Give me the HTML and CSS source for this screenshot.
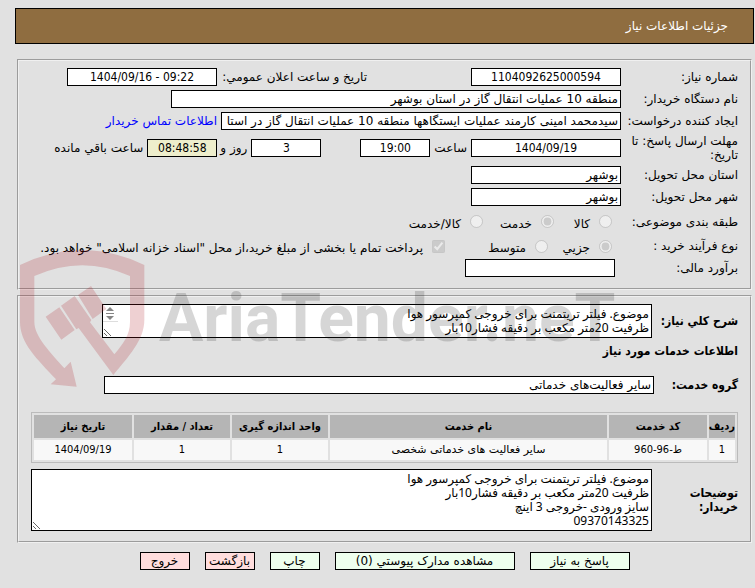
FILE: index.html
```html
<!DOCTYPE html>
<html lang="fa" dir="rtl">
<head>
    <meta charset="UTF-8">
    <meta name="viewport" content="width=device-width, initial-scale=1.0">
    <title>جزئیات اطلاعات نیاز</title>
    <link rel="stylesheet" href="styles.css">
</head>
<body>
    <h1 class="page-title">جزئیات اطلاعات نیاز</h1>

    <form>
        <fieldset class="panel">
            <div class="row">
                <label class="caption" for="needNo">شماره نیاز:</label>
                <input class="field center" type="text" id="needNo" value="1104092625000594" readonly>
                <label class="caption-date" for="announceDate">تاریخ و ساعت اعلان عمومي:</label>
                <input class="field center" type="text" id="announceDate" dir="ltr" value="1404/09/16 - 09:22" readonly>
            </div>
            <div class="row">
                <label class="caption" for="buyer">نام دستگاه خریدار:</label>
                <input class="field buyer" type="text" id="buyer" value="منطقه 10 عملیات انتقال گاز در استان بوشهر" readonly>
            </div>
            <div class="row">
                <label class="caption" for="creator">ایجاد کننده درخواست:</label>
                <input class="field creator" type="text" id="creator" value="سیدمحمد امینی کارمند عملیات ایستگاهها منطقه 10 عملیات انتقال گاز در استا" readonly>
                <a class="contact" href="#">اطلاعات تماس خریدار</a>
            </div>
            <div class="row tall">
                <label class="caption" for="deadline">مهلت ارسال پاسخ: تا تاریخ:</label>
                <input class="field center" type="text" id="deadline" dir="ltr" value="1404/09/19" readonly>
                <label for="deadlineTime">ساعت</label>
                <input class="field small center" type="text" id="deadlineTime" dir="ltr" value="19:00" readonly>
                <input class="field small center days" type="text" id="daysLeft" value="3" readonly>
                <label class="days-label" for="daysLeft">روز و</label>
                <input class="field small center timer" type="text" id="timeLeft" dir="ltr" value="08:48:58" readonly>
                <label for="timeLeft">ساعت باقي مانده</label>
            </div>
            <div class="row">
                <label class="caption" for="province">استان محل تحویل:</label>
                <input class="field" type="text" id="province" value="بوشهر" readonly>
            </div>
            <div class="row">
                <label class="caption" for="city">شهر محل تحویل:</label>
                <input class="field" type="text" id="city" value="بوشهر" readonly>
            </div>
            <div class="row options">
                <span class="caption">طبقه بندی موضوعی:</span>
                <div class="option goods"><input type="radio" name="category" id="goods" disabled><label for="goods">کالا</label></div>
                <div class="option service"><input type="radio" name="category" id="service" checked disabled><label for="service">خدمت</label></div>
                <div class="option"><input type="radio" name="category" id="both" disabled><label for="both">کالا/خدمت</label></div>
            </div>
            <div class="row">
                <span class="caption">نوع فرآیند خرید :</span>
                <div class="option minor"><input type="radio" name="process" id="minor" checked disabled><label for="minor">جزیي</label></div>
                <div class="option medium"><input type="radio" name="process" id="medium" disabled><label for="medium">متوسط</label></div>
                <div class="option"><input type="checkbox" id="treasury" checked disabled><label for="treasury">پرداخت تمام یا بخشی از مبلغ خرید،از محل "اسناد خزانه اسلامی" خواهد بود.</label></div>
            </div>
            <div class="row">
                <label class="caption" for="estimate">برآورد مالی:</label>
                <input class="field estimate" type="text" id="estimate" readonly>
            </div>
        </fieldset>

        <fieldset class="panel details">
            <div class="detail-row">
                <label class="bold-caption" for="summary">شرح كلي نياز:</label>
                <div class="summary-box">
                    <textarea class="area summary" id="summary" readonly>موضوع. فیلتر تریتمنت برای خروجی کمپرسور هوا
ظرفیت 20متر مکعب بر دقیقه فشار10بار</textarea>
                    <svg class="arrows" width="15" height="17" viewBox="0 0 15 17">
                        <path d="M3 6L7 2L11 6ZM3 11L7 15L11 11Z" fill="#858585"/>
                        <path d="M3 8.5H11" stroke="#858585"/>
                        <path d="M0 16.5H15" stroke="#ddd"/>
                    </svg>
                </div>
            </div>
            <h2 class="section-title">اطلاعات خدمات مورد نیاز</h2>
            <div class="detail-row">
                <label class="bold-caption group-caption" for="group">گروه خدمت:</label>
                <input class="field group" type="text" id="group" value="سایر فعالیت‌های خدماتی" readonly>
            </div>

            <table class="services">
                <thead>
                    <tr>
                        <th class="col-index">ردیف</th>
                        <th class="col-code">کد خدمت</th>
                        <th>نام خدمت</th>
                        <th class="col-unit">واحد اندازه گیری</th>
                        <th class="col-unit">تعداد / مقدار</th>
                        <th class="col-code">تاریخ نیاز</th>
                    </tr>
                </thead>
                <tbody>
                    <tr>
                        <td>1</td>
                        <td>ط-96-960</td>
                        <td class="service-name">سایر فعالیت های خدماتی شخصی</td>
                        <td>1</td>
                        <td>1</td>
                        <td>1404/09/19</td>
                    </tr>
                </tbody>
            </table>

            <div class="detail-row">
                <label class="bold-caption" for="notes">توضیحات خریدار:</label>
                <textarea class="area notes" id="notes" readonly>موضوع. فیلتر تریتمنت برای خروجی کمپرسور هوا
ظرفیت 20متر مکعب بر دقیقه فشار10بار
سایز ورودی -خروجی 3 اینچ
09370143325</textarea>
            </div>
        </fieldset>

        <div class="actions">
            <button class="btn answer" type="button">پاسخ به نیاز</button>
            <button class="btn attachments" type="button">مشاهده مدارک پیوستي (0)</button>
            <button class="btn" type="button">چاپ</button>
            <button class="btn red" type="button">بازگشت</button>
            <button class="btn red" type="button">خروج</button>
        </div>
    </form>

    <div class="watermark" dir="ltr">
        <svg width="147" height="150" viewBox="0 0 441 450">
            <path d="M60 75Q247 -15 433 75V240C433 300 385 350 340 405L236 264L229 268L183 197L224 168L274 240L270 247L343 343C370 310 390 285 390 245V108Q247 43 103 108V245C103 290 150 335 193 385L212 365L230 440L152 433L168 418C110 355 60 310 60 245Z"/>
            <path d="M137 230L178 202L224 270L184 299ZM234 165L273 138L319 207L278 237Z"/>
        </svg>
        <span class="watermark-text">AriaTender.neT</span>
    </div>
</body>
</html>
```
FILE: styles.css
```css
* {
    box-sizing: border-box;
}
body {
    position: relative;
    margin: 0;
    padding: 8px 1px 0 15px;
    background-color: #e1e1e1;
    color: #000;
    font-family: "DejaVu Sans", sans-serif;
    font-size: 12px;
    line-height: 14px;
}
.page-title {
    margin: 0 0 15px;
    padding: 10px 25px;
    border: 1px solid #000;
    background-color: #8f6d40;
    color: #fff;
    font-size: 12px;
    font-weight: normal;
    line-height: 14px;
}
.panel {
    min-width: 0;
    margin: 0 2px 5px;
    padding: 5px 12px 9px;
    border: 2px groove #f0f0f0;
}
.row {
    display: flex;
    align-items: center;
    gap: 4px;
    height: 22px;
    white-space: nowrap;
}
.tall {
    height: 32px;
}
.options {
    height: 27px;
}
.caption {
    flex: none;
    width: 113px;
    white-space: normal;
}
.field {
    flex: none;
    width: 150px;
    height: 18px;
    padding: 0 2px;
    border: 1px solid #000;
    border-radius: 0;
    background-color: #fff;
    color: #000;
    font: inherit;
}
.center {
    font-family: "DejaVu Sans Condensed", "DejaVu Sans", sans-serif;
    text-align: center;
}
.caption-date {
    width: 246px;
    padding-right: 100px;
}
.buyer {
    width: 450px;
}
.creator {
    width: 400px;
}
.contact {
    color: #00f;
    text-decoration: none;
}
.small {
    width: 70px;
}
.days {
    margin-right: 35px;
}
.days-label {
    width: 26px;
}
.timer {
    background-color: #eeeecc;
}
.estimate {
    margin-right: 6px;
}

/* radio and checkbox choices */
.option {
    display: flex;
    align-items: center;
    gap: 9px;
}
.option input {
    flex: none;
    width: 13px;
    height: 13px;
    margin: 0;
}
.option label {
    padding-top: 4px;
}
.goods {
    width: 54px;
    margin-right: 9px;
}
.service {
    width: 67px;
}
.minor {
    width: 60px;
    margin-right: 9px;
}
.medium {
    width: 99px;
}

.details {
    padding-top: 7px;
    padding-bottom: 10px;
}
.detail-row {
    display: flex;
    align-items: center;
}
.bold-caption {
    flex: none;
    width: 86px;
    font-family: "DejaVu Sans Condensed", "DejaVu Sans", sans-serif;
    font-weight: bold;
}
.group-caption {
    width: 84px;
}
.summary-box {
    position: relative;
    width: 550px;
}
.area {
    display: block;
    width: 100%;
    margin: 0;
    padding: 2px;
    border: 1px solid #000;
    border-radius: 0;
    background-color: #fff;
    color: #000;
    font-family: "Noto Sans", "DejaVu Sans", sans-serif;
    font-size: 12px;
    line-height: 14px;
    overflow: hidden;
}
.summary {
    height: 34px;
}
.arrows {
    position: absolute;
    top: 1px;
    left: 1px;
}
.section-title {
    margin: 6px 0 18px;
    font-family: "DejaVu Sans Condensed", "DejaVu Sans", sans-serif;
    font-size: 12px;
    line-height: 14px;
}
.group {
    width: 550px;
}
.services {
    width: 100%;
    margin: 18px 0 6px;
    border: 1px solid #bbb;
    border-spacing: 2px;
    table-layout: fixed;
    text-align: center;
    font-family: "DejaVu Sans Condensed", "DejaVu Sans", sans-serif;
    font-size: 11px;
}
.services th {
    height: 23px;
    padding: 0;
    background-color: #b5b5b5;
}
.services td {
    height: 20px;
    padding: 0;
    background-color: #f8f8f8;
}
.services .service-name {
    font-family: "DejaVu Sans", sans-serif;
}
.col-index {
    width: 26px;
}
.col-code {
    width: 98px;
}
.col-unit {
    width: 96px;
}
.notes {
    flex: 1;
    height: 62px;
}

.actions {
    display: flex;
    justify-content: center;
    gap: 15px;
    padding-top: 4px;
}
.btn {
    width: 50px;
    height: 18px;
    padding: 0;
    border: 1px solid #000;
    background-color: #eeffee;
    color: #000;
    font: inherit;
    white-space: nowrap;
}
.answer {
    width: 100px;
}
.attachments {
    width: 180px;
}
.red {
    background-color: #ffdddd;
}

.watermark {
    position: absolute;
    top: 240px;
    left: 0;
    display: flex;
    gap: 12px;
    pointer-events: none;
}
.watermark svg {
    fill: rgba(170, 20, 30, 0.2);
}
.watermark-text {
    padding-top: 36px;
    color: rgba(30, 30, 30, 0.18);
    font-family: Roboto, sans-serif;
    font-size: 66px;
    font-weight: bold;
    line-height: 86px;
}
```
